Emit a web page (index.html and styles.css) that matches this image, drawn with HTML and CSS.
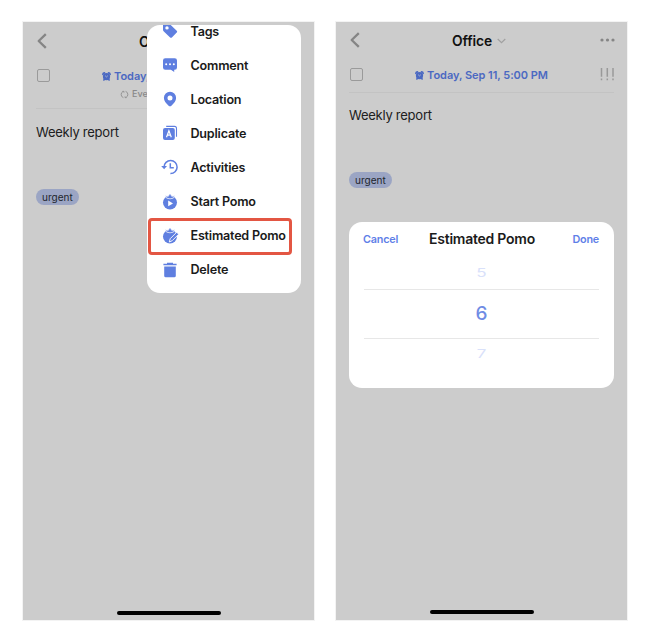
FILE: index.html
```html
<!DOCTYPE html>
<html lang="en">
<head>
<meta charset="utf-8">
<title>Estimated Pomo</title>
<link rel="stylesheet" href="styles.css">
</head>
<body>
<svg class="defs" width="0" height="0">
  <symbol id="alarm" viewBox="0 0 10 10">
    <path d="M.9 2.600A2 2 0 0 1 2.800 1M9.100 2.600A2 2 0 0 0 7.200 1M2.600 8.300l-.5.600M7.400 8.300l.5.600" fill="none" stroke="currentColor" stroke-width="1.800" stroke-linecap="round"/>
    <circle cx="5" cy="5.200" r="4" fill="currentColor"/>
    <path d="M3.500 4.100l1.400 1.400 1.600-1.400" fill="none" stroke="#ccc" stroke-width=".8"/>
  </symbol>
  <symbol id="back" viewBox="0 0 10 16"><path d="M8.800 1.200L1.700 8l7.100 6.800" fill="none" stroke="currentColor" stroke-width="2.300" stroke-linejoin="round"/></symbol>
  <symbol id="caret" viewBox="0 0 10 6"><path d="M.8.8L5 4.900 9.200.8" fill="none" stroke="currentColor" stroke-width="1.300"/></symbol>
  <symbol id="tomato" viewBox="0 0 16 16">
    <circle cx="8" cy="8.600" r="7"/>
    <path d="M3.200 1.600l2.500 1L8 .9l2.300 1.700 2.500-1-1.500 2.600q-3.300 1.200-6.600 0z" stroke="#fff" stroke-width=".7"/>
    <path d="M7.300.5h1.400v1.500H7.300z"/>
  </symbol>
</svg>
<main class="screens">
  <section class="phone">
    <header class="bar">
      <svg class="back"><use href="#back"/></svg>
      <h1 class="title">Office<svg class="caret"><use href="#caret"/></svg></h1>
    </header>
    <div class="task">
      <span class="check"></span>
      <div class="when">
        <p class="date"><svg class="alarm"><use href="#alarm"/></svg>Today, Sep 11, 5:00 PM</p>
        <p class="repeat"><svg class="loop" viewBox="0 0 10 10"><path d="M3.800 8.500A3.700 3.700 0 0 1 3.300 1.700M6.200 1.500A3.700 3.700 0 0 1 6.700 8.300M2.800 1.500h1.600v1.400M7.200 8.500H5.600V7.100" fill="none" stroke="currentColor" stroke-width=".9"/></svg>Every day</p>
      </div>
    </div>
    <p class="note">Weekly report</p>
    <span class="tag">urgent</span>
    <div class="home"></div>
    <div class="menu">
      <ul class="menu-list">
        <li class="item"><svg class="icon" viewBox="0 0 16 16"><path fill-rule="evenodd" d="M1 2.200Q1 1 2.200 1H7q.7 0 1.200.5l6.500 6.300q.9.900 0 1.800l-4.800 4.800q-.9.800-1.800 0L1.600 8.200Q1 7.600 1 7zM5 3.200a1.700 1.700 0 1 0 0 3.400 1.700 1.700 0 0 0 0-3.400z"/></svg>Tags</li>
        <li class="item"><svg class="icon" viewBox="0 0 16 16"><path d="M3.300 1.200h9.400a2.300 2.300 0 0 1 2.300 2.300v7a2.300 2.300 0 0 1-2.300 2.300h-.5v2.100L8.900 12.800H3.300A2.300 2.300 0 0 1 1 10.500v-7a2.300 2.300 0 0 1 2.300-2.300z"/><g fill="#fff"><circle cx="4.200" cy="7.200" r="1"/><circle cx="8" cy="7.200" r="1"/><circle cx="11.800" cy="7.200" r="1"/></g></svg>Comment</li>
        <li class="item"><svg class="icon" viewBox="0 0 16 16"><path fill-rule="evenodd" d="M8 .7a6.100 6.100 0 0 1 6.100 6.100c0 3.300-2 5.100-4.700 7.900q-1.400 1.300-2.800 0C3.900 11.900 1.900 10.100 1.900 6.800A6.100 6.100 0 0 1 8 .7zM8 4.400a2.500 2.500 0 1 0 0 5 2.500 2.500 0 0 0 0-5z"/></svg>Location</li>
        <li class="item"><svg class="icon" viewBox="0 0 16 16"><rect x="1" y="3" width="11.800" height="12" rx="2"/><path d="M4.200 1.400h8.300q2 0 2 2v8.300" fill="none" stroke="currentColor" stroke-width="1.100"/><path d="M4.500 12.200l2.400-6.500 2.400 6.500M5.300 10.200h3.200" fill="none" stroke="#fff" stroke-width="1.200"/></svg>Duplicate</li>
        <li class="item"><svg class="icon icon-wide" viewBox="-1 0 17 16"><path d="M2.100 8A6.500 6.500 0 1 1 8.400 14.500M8.300 4.300v4.500h3.500" fill="none" stroke="currentColor" stroke-width="1.500"/><path d="M-.8 7h5.800L2.100 10.200z"/></svg>Activities</li>
        <li class="item"><svg class="icon" viewBox="0 0 16 16"><use href="#tomato"/><path d="M6.200 6.500l4.800 2.900-4.800 2.900z" fill="#fff"/></svg>Start Pomo</li>
        <li class="item"><svg class="icon" viewBox="0 0 16 16"><use href="#tomato"/><path d="M7.300 14l.9-3.300 6.500-6.500 2 2-6.500 6.500z" fill="currentColor" stroke="#fff" stroke-width=".9"/></svg>Estimated Pomo</li>
        <li class="item"><svg class="icon" viewBox="0 0 16 16"><path d="M5 .8h6v.9h3.600v1.500H1.400V1.700H5zM2.200 4.400h11.600v9.300q0 1.500-1.500 1.500H3.700q-1.500 0-1.500-1.500z"/></svg>Delete</li>
      </ul>
      <div class="highlight"></div>
    </div>
  </section>

  <section class="phone phone-picker">
    <header class="bar">
      <svg class="back"><use href="#back"/></svg>
      <h1 class="title">Office<svg class="caret"><use href="#caret"/></svg></h1>
      <svg class="more" viewBox="0 0 15 4"><circle cx="2" cy="2" r="1.600"/><circle cx="7.500" cy="2" r="1.600"/><circle cx="13" cy="2" r="1.600"/></svg>
    </header>
    <div class="task">
      <span class="check"></span>
      <div class="when">
        <p class="date"><svg class="alarm"><use href="#alarm"/></svg>Today, Sep 11, 5:00 PM</p>
      </div>
      <svg class="priority" viewBox="0 0 14 13"><path d="M1.500 0v8.800M7.300 0v8.800M13 0v8.800M1.500 10.600v1.600M7.300 10.600v1.600M13 10.600v1.600" stroke="currentColor" stroke-width="1.500"/></svg>
    </div>
    <p class="note">Weekly report</p>
    <span class="tag">urgent</span>
    <div class="home"></div>
    <div class="dialog">
      <div class="dialog-bar"><span class="action">Cancel</span><h2 class="dialog-title">Estimated Pomo</h2><span class="action done">Done</span></div>
      <div class="wheel">
        <div class="ghost"><span class="digit digit-prev">5</span></div>
        <div class="chosen">6</div>
        <div class="ghost"><span class="digit digit-next">7</span></div>
      </div>
    </div>
  </section>
</main>
</body>
</html>
```
FILE: styles.css
```css
* { box-sizing: border-box; margin: 0; padding: 0; }
body { background: #fff; font-family: Inter, "Liberation Sans", sans-serif; color: #1b1b1b; }
.defs { position: absolute; }
svg { display: block; flex: none; overflow: visible; }
.screens { display: flex; gap: 22px; padding: 22px 23px; }
.phone { position: relative; display: flex; flex-direction: column; align-items: flex-start; width: 291px; height: 598px; background: #ccc; box-shadow: 0 0 0 1px #f3f3f3; }
.bar { display: grid; grid-template-columns: 30px 1fr 30px; align-items: center; width: 100%; height: 37px; padding: 0 12px 0 14px; }
.back { width: 10px; height: 16px; color: #858585; }
.title { display: flex; align-items: center; justify-content: center; gap: 5px; padding: 2px 7px 0 0; font-size: 13.8px; line-height: 18px; font-weight: 600; letter-spacing: -.1px; color: #111; }
.caret { width: 9px; height: 6px; color: #a0a0a0; }
.more { width: 15px; height: 4px; justify-self: end; fill: #858585; }
.task { display: grid; grid-template-columns: 24px 1fr 24px; width: 265px; height: 50px; margin-left: 13px; padding: 10px 0 0 1px; border-bottom: 1px solid #c3c3c3; }
.check { width: 13px; height: 13px; border: 1.5px solid #9a9a9a; border-radius: 2px; }
.when { display: flex; flex-direction: column; align-items: center; gap: 5px; }
.date { display: flex; align-items: center; gap: 3px; padding-right: 1px; font-size: 11px; line-height: 14px; font-weight: 600; letter-spacing: -.04px; color: #4b69c2; white-space: nowrap; }
.alarm { width: 9px; height: 9px; }
.repeat { display: flex; align-self: flex-start; align-items: center; gap: 3px; margin-left: 59px; font-size: 9px; line-height: 12px; font-weight: 500; color: #888; }
.loop { width: 9px; height: 9px; }
.note { margin: 14px 0 0 13px; font-size: 13px; line-height: 18px; letter-spacing: -.25px; color: #202020; }
.tag { margin: 48px 0 0 13px; padding: 0 6px; height: 16px; border-radius: 8px; background: #9ba5c4; font-size: 10px; line-height: 16px; color: #22252d; }
.home { width: 104px; height: 4px; margin: auto auto 5.500px; border-radius: 2px; background: #000; }
.menu { position: absolute; left: 124px; top: 3px; width: 154px; height: 268px; border-radius: 13px; background: #fff; }
.menu-list { height: 268px; overflow: hidden; border-radius: 13px; list-style: none; padding: 6px 0 0 15px; }
.item { display: flex; align-items: center; gap: 12.5px; height: 34.1px; font-size: 12.6px; font-weight: 600; letter-spacing: -.22px; white-space: nowrap; }
.item:first-child { margin-top: -17px; }
.icon { width: 16px; height: 16px; fill: #5f7fe0; color: #5f7fe0; }
.icon-wide { width: 17px; margin-left: -1px; }
.highlight { position: absolute; left: 1px; top: 193px; width: 144px; height: 37px; border: 3px solid #e35643; border-radius: 4px; }
.phone-picker .bar { height: 35px; }
.phone-picker .task { height: 36px; padding-top: 11px; }
.phone-picker .date { line-height: 15px; }
.phone-picker .note { margin-top: 13px; }
.phone-picker .tag { line-height: 17px; }
.phone-picker .home { margin-bottom: 6.500px; }
.priority { width: 14px; height: 13px; justify-self: end; color: #999; }
.dialog { position: absolute; left: 13px; top: 200px; width: 265px; height: 166px; padding: 0 15px 0 14px; border-radius: 13px; background: #fff; }
.dialog-bar { display: grid; grid-template-columns: 50px 1fr 50px; align-items: center; height: 34px; }
.dialog-title { padding: 0 0 2px 2px; text-align: center; font-size: 14px; font-weight: 600; letter-spacing: -.24px; white-space: nowrap; }
.action { padding-top: 1px; font-size: 10.8px; font-weight: 600; letter-spacing: -.2px; color: #5f7fe8; }
.done { text-align: right; }
.wheel { display: flex; flex-direction: column; margin-left: 1px; text-align: center; }
.ghost { display: flex; justify-content: center; height: 33px; overflow: hidden; font-size: 17px; line-height: 18px; }
.digit { display: block; height: 18px; transform: scaleY(.65); color: #d9e1fa; }
.digit-prev { margin-top: 8px; }
.digit-next { margin-top: 6px; }
.chosen { height: 50px; border: solid #e7e7e7; border-width: 1px 0; font-size: 19px; line-height: 48px; font-weight: 500; color: #6f8ce4; }
```
